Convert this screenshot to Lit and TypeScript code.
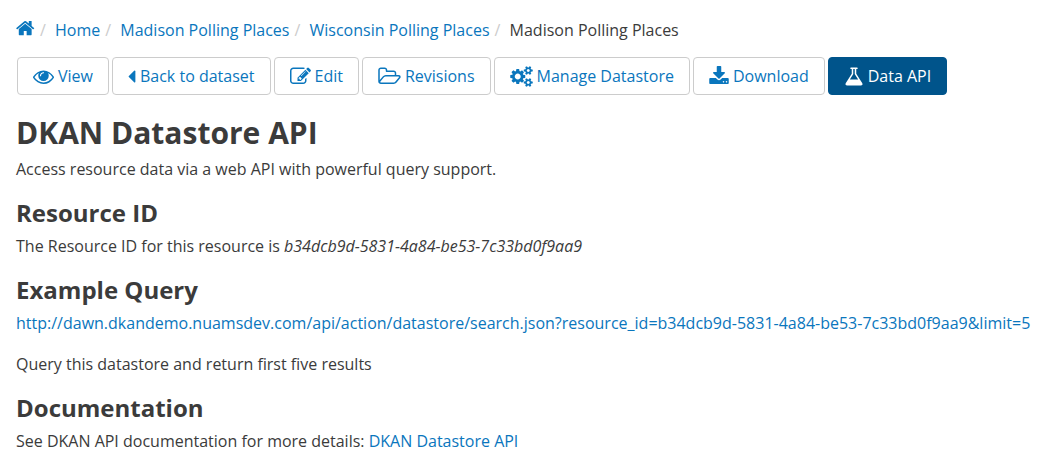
import { LitElement, html, css, svg } from "lit";
import { customElement } from "lit/decorators.js";
import { classMap } from "lit/directives/class-map.js";

interface Icon {
  box: string;
  size: string;
  path: string;
}

const smallCog = (y: number) =>
  `M1984 ${y}v140q0 16-149 31-12 27-30 52 51 113 51 138 0 4-4 7-122 71-124 71-8 0-46-47t-52-68q-20 2-30 2t-30-2q-14 21-52 68t-46 47q-2 0-124-71-4-3-4-7 0-25 51-138-18-25-30-52-149-15-149-31v-140q0-16 149-31 13-29 30-52-51-113-51-138 0-4 4-7 4-2 35-20t59-34 30-16q8 0 46 46.5t52 67.5q20-2 30-2t30 2q51-71 92-112l6-2q4 0 124 70 4 3 4 7 0 25-51 138 17 23 30 52 149 15 149 31z`;

const icons: Record<string, Icon> = {
  home: {
    box: "90 80 1664 1792",
    size: "home",
    path: "M1472 992v480q0 26-19 45t-45 19h-384v-384h-256v384h-384q-26 0-45-19t-19-45v-480q0-1 .5-3t.5-3l575-474 575 474q1 2 1 6zm223-69l-62 74q-8 9-21 11h-3q-13 0-21-7l-692-577-692 577q-12 8-24 7-13-2-21-11l-62-74q-8-10-7-23.5t11-21.5l719-599q32-26 76-26t76 26l244 204v-195q0-14 9-23t23-9h192q14 0 23 9t9 23v408l219 182q10 8 11 21.5t-7 23.5z",
  },
  eye: {
    box: "0 0 1792 1792",
    size: "regular",
    path: "M1664 960q-152-236-381-353 61 104 61 225 0 185-131.5 316.5t-316.5 131.5-316.5-131.5-131.5-316.5q0-121 61-225-229 117-381 353 133 205 333.5 326.5t434.5 121.5 434.5-121.5 333.5-326.5zm-720-384q0-20-14-34t-34-14q-125 0-214.5 89.5t-89.5 214.5q0 20 14 34t34 14 34-14 14-34q0-86 61-147t147-61q20 0 34-14t14-34zm848 384q0 34-20 69-140 230-376.5 368.5t-499.5 138.5-499.5-139-376.5-368q-20-35-20-69t20-69q140-229 376.5-368t499.5-139 499.5 139 376.5 368q20 35 20 69z",
  },
  back: {
    box: "608 0 640 1792",
    size: "narrow",
    path: "M1216 448v896q0 26-19 45t-45 19-45-19l-448-448q-19-19-19-45t19-45l448-448q19-19 45-19t45 19 19 45z",
  },
  edit: {
    box: "0 0 1792 1792",
    size: "regular",
    path: "M888 1184l116-116-152-152-116 116v56h96v96h56zm440-720q-16-16-33 1l-350 350q-17 17-1 33t33-1l350-350q17-17 1-33zm80 594v190q0 119-84.5 203.5t-203.5 84.5h-832q-119 0-203.5-84.5t-84.5-203.5v-832q0-119 84.5-203.5t203.5-84.5h832q63 0 117 25 15 7 18 23 3 17-9 29l-49 49q-14 14-32 8-23-6-45-6h-832q-66 0-113 47t-47 113v832q0 66 47 113t113 47h832q66 0 113-47t47-113v-126q0-13 9-22l64-64q15-15 35-7t20 29zm-96-738l288 288-672 672h-288v-288zm444 132l-92 92-288-288 92-92q28-28 68-28t68 28l152 152q28 28 28 68t-28 68z",
  },
  folder: {
    box: "64 0 1920 1792",
    size: "wide",
    path: "M1845 931q0-35-53-35h-1088q-40 0-85.5 21.5t-71.5 52.5l-294 363q-18 24-18 40 0 35 53 35h1088q40 0 86-22t71-53l294-363q18-22 18-39zm-1141-163h768v-160q0-40-28-68t-68-28h-576q-40 0-68-28t-28-68v-64q0-40-28-68t-68-28h-320q-40 0-68 28t-28 68v853l256-315q44-53 116-87.5t140-34.5zm1269 163q0 62-46 120l-295 363q-43 53-116 87.5t-140 34.5h-1088q-92 0-158-66t-66-158v-960q0-92 66-158t158-66h320q92 0 158 66t66 158v32h544q92 0 158 66t66 158v160h192q54 0 99 24.5t67 70.5q15 32 15 68z",
  },
  cogs: {
    box: "64 0 1920 1792",
    size: "wide",
    path:
      "M960 896q0-106-75-181t-181-75-181 75-75 181 75 181 181 75 181-75 75-181zm768 512q0-52-38-90t-90-38-90 38-38 90q0 53 37.5 90.5t90.5 37.5 90.5-37.5 37.5-90.5zm0-1024q0-52-38-90t-90-38-90 38-38 90q0 53 37.5 90.5t90.5 37.5 90.5-37.5 37.5-90.5zm-384 421v185q0 10-7 19.5t-16 10.5l-155 24q-11 35-32 76 34 48 90 115 7 11 7 20 0 12-7 19-23 30-82.5 89.5t-78.5 59.5q-11 0-21-7l-115-90q-37 19-77 31-11 108-23 155-7 24-30 24h-186q-11 0-20-7.5t-10-17.5l-23-153q-34-10-75-31l-118 89q-7 7-20 7-11 0-21-8-144-133-144-160 0-9 7-19 10-14 41-53t47-61q-23-44-35-82l-152-24q-10-1-17-9.5t-7-19.5v-185q0-10 7-19.5t16-10.5l155-24q11-35 32-76-34-48-90-115-7-11-7-20 0-12 7-20 22-30 82-89t79-59q11 0 21 7l115 90q34-18 77-32 11-108 23-154 7-24 30-24h186q11 0 20 7.5t10 17.5l23 153q34 10 75 31l118-89q8-7 20-7 11 0 21 8 144 133 144 160 0 8-7 19-12 16-42 54t-45 60q23 48 34 82l152 23q10 2 17 10.5t7 19.5z" +
      smallCog(1338) +
      smallCog(314),
  },
  download: {
    box: "64 0 1664 1792",
    size: "medium",
    path: "M1344 1344q0-26-19-45t-45-19-45 19-19 45 19 45 45 19 45-19 19-45zm256 0q0-26-19-45t-45-19-45 19-19 45 19 45 45 19 45-19 19-45zm128-224v320q0 40-28 68t-68 28h-1472q-40 0-68-28t-28-68v-320q0-40 28-68t68-28h465l135 136q58 56 136 56t136-56l136-136h464q40 0 68 28t28 68zm-325-569q17 41-14 70l-448 448q-18 19-45 19t-45-19l-448-448q-31-29-14-70 17-39 59-39h256v-448q0-26 19-45t45-19h256q26 0 45 19t19 45v448h256q42 0 59 39z",
  },
  flask: {
    box: "64 0 1664 1792",
    size: "medium",
    path: "M1591 1448q56 89 21.5 152.5t-140.5 63.5h-1152q-106 0-140.5-63.5t21.5-152.5l503-793v-399h-64q-26 0-45-19t-19-45 19-45 45-19h512q26 0 45 19t19 45-19 45-45 19h-64v399zm-779-725l-272 429h712l-272-429-20-31v-436h-128v436z",
  },
};

const drawIcon = (name: string) => {
  const icon = icons[name];
  return html`<svg class="icon ${icon.size}" viewBox=${icon.box} aria-hidden="true">
    ${svg`<path d=${icon.path}></path>`}
  </svg>`;
};

const crumbs = ["Home", "Madison Polling Places", "Wisconsin Polling Places"];

const actions = [
  { icon: "eye", label: "View" },
  { icon: "back", label: "Back to dataset" },
  { icon: "edit", label: "Edit" },
  { icon: "folder", label: "Revisions" },
  { icon: "cogs", label: "Manage Datastore" },
  { icon: "download", label: "Download" },
  { icon: "flask", label: "Data API", active: true },
];

const queryUrl =
  "http://dawn.dkandemo.nuamsdev.com/api/action/datastore/search.json?resource_id=b34dcb9d-5831-4a84-be53-7c33bd0f9aa9&limit=5";

@customElement("app-root")
export class AppRoot extends LitElement {
  static styles = css`
    :host {
      display: block;
      padding: 19px 8px 12px 16px;
      background: #fff;
      color: #3b3b3b;
      font: 16px/23px "Open Sans", sans-serif;
    }
    a {
      color: #0a76bd;
      text-decoration: none;
    }
    a:hover {
      text-decoration: underline;
    }
    .icon {
      flex: none;
      height: 21px;
      fill: currentColor;
    }
    .home {
      display: block;
      width: 19px;
      height: 20px;
    }
    .narrow {
      width: 8px;
    }
    .medium {
      width: 20px;
    }
    .regular {
      width: 21px;
    }
    .wide {
      width: 23px;
    }
    .crumbs {
      display: flex;
      flex-wrap: wrap;
      margin: 0 0 15px;
      padding: 0;
      list-style: none;
    }
    .crumb + .crumb::before {
      content: "/\\00a0";
      padding: 0 5px;
      color: #ccc;
    }
    .actions {
      display: flex;
      flex-wrap: wrap;
      gap: 3px;
      margin: 0 0 21px;
      padding: 0 0 0 1px;
      list-style: none;
    }
    .action {
      display: flex;
      align-items: center;
      gap: 4px;
      box-sizing: border-box;
      min-height: 38px;
      padding: 0 15px;
      border: 1px solid #ccc;
      border-radius: 4px;
      white-space: nowrap;
    }
    .action:hover {
      text-decoration: none;
      background: #f2f2f2;
    }
    .action.active {
      border-color: #00548b;
      background: #00548b;
      color: #fff;
    }
    h1,
    h2 {
      font-weight: 700;
    }
    h1 {
      margin: 0 0 9px;
      font-size: 30px;
      line-height: 33px;
    }
    h2 {
      margin: 19px 0 9px;
      font-size: 24px;
      line-height: 26px;
    }
    p {
      margin: 0 0 18px;
      overflow-wrap: anywhere;
    }
  `;

  render() {
    return html`
      <nav aria-label="Breadcrumb">
        <ol class="crumbs">
          <li class="crumb"><a href="#" aria-label="Front page">${drawIcon("home")}</a></li>
          ${crumbs.map((c) => html`<li class="crumb"><a href="#">${c}</a></li>`)}
          <li class="crumb" aria-current="page">Madison Polling Places</li>
        </ol>
      </nav>
      <nav aria-label="Resource">
        <ul class="actions">
          ${actions.map(
            (a) => html`<li>
              <a class=${classMap({ action: true, active: !!a.active })} href="#"
                >${drawIcon(a.icon)}<span>${a.label}</span></a
              >
            </li>`
          )}
        </ul>
      </nav>
      <main>
        <h1>DKAN Datastore API</h1>
        <p>Access resource data via a web API with powerful query support.</p>
        <h2>Resource ID</h2>
        <p>The Resource ID for this resource is <em>b34dcb9d-5831-4a84-be53-7c33bd0f9aa9</em></p>
        <h2>Example Query</h2>
        <p><a href=${queryUrl}>${queryUrl}</a></p>
        <p>Query this datastore and return first five results</p>
        <h2>Documentation</h2>
        <p>See DKAN API documentation for more details: <a href="#">DKAN Datastore API</a></p>
      </main>
    `;
  }
}
